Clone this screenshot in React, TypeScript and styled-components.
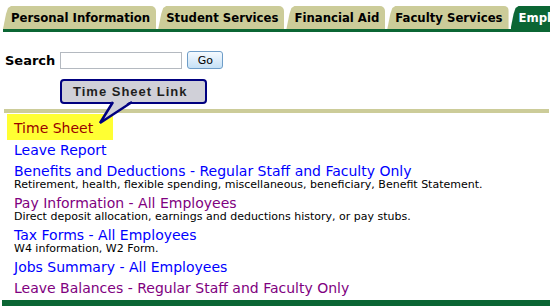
import styled, { createGlobalStyle } from "styled-components";

const GlobalStyle = createGlobalStyle`
  html, body {
    margin: 0;
    padding: 0;
    background: #ffffff;
  }
  body {
    width: 550px;
    height: 306px;
    overflow: hidden;
    font-family: "DejaVu Sans", Verdana, sans-serif;
  }
`;

const Page = styled.div`
  height: 306px;
  display: flex;
  flex-direction: column;
  padding-left: 3px;
  box-sizing: border-box;
  overflow: hidden;
`;

const TabBar = styled.nav`
  display: flex;
  align-items: flex-end;
  gap: 2px;
  margin-top: 6px;
  border-bottom: 3px solid #0b6634;
  white-space: nowrap;
  overflow: hidden;
`;

const Tab = styled.a<{ $active?: boolean }>`
  flex: none;
  height: 23px;
  box-sizing: border-box;
  padding: 3px 6px 0 8px;
  background: ${(p) => (p.$active ? "#0b6634" : "#cccc99")};
  color: ${(p) => (p.$active ? "#ffffff" : "#000000")};
  font: bold 13px/17px "DejaVu Sans Condensed", "DejaVu Sans", sans-serif;
  font-stretch: condensed;
  text-decoration: none;
  border-top-right-radius: 5px;
  clip-path: polygon(0 100%, 3px 8px, 5px 2px, 8px 0, 100% 0, 100% 100%);
`;

const SearchRow = styled.form`
  display: flex;
  align-items: center;
  height: 18px;
  margin: 19px 0 0 2px;
`;

const SearchLabel = styled.label`
  font: bold 13px "DejaVu Sans", sans-serif;
  color: #000;
  margin-right: 5px;
`;

const SearchInput = styled.input`
  width: 122px;
  height: 17px;
  box-sizing: border-box;
  border: 1px solid #b4b9c0;
  margin: 0 5px 0 0;
  padding: 0 2px;
`;

const GoButton = styled.button`
  width: 36px;
  height: 18px;
  padding: 0;
  font: 11px "DejaVu Sans", sans-serif;
  color: #000;
  border: 1px solid #6e9dc8;
  border-radius: 3px;
  background: linear-gradient(#f5faff, #c6e1f6);
`;

const AnnotationArea = styled.div`
  height: 40px;
  padding-top: 10px;
  box-sizing: border-box;
`;

const Callout = styled.div`
  position: relative;
  margin-left: 57px;
  width: 147px;
  height: 25px;
  box-sizing: border-box;
  border: 2px solid #000080;
  border-radius: 4px;
  background: #d0d0d8;
  color: #1e1e1e;
  font: bold 13px/21px "Liberation Sans", Arial, sans-serif;
  letter-spacing: 1px;
  padding-left: 11px;
`;

const CalloutTail = styled.svg`
  position: absolute;
  left: 34px;
  top: 19px;
  overflow: visible;
`;

const Rule = styled.hr`
  height: 4px;
  margin: 0 1px;
  border: none;
  background: #cccc99;
`;

const LinkList = styled.ul`
  list-style: none;
  margin: 0;
  padding: 0;
  flex: 1;
`;

const Item = styled.li<{ $highlight?: boolean }>`
  ${(p) =>
    p.$highlight
      ? `
    width: 106px;
    box-sizing: border-box;
    margin: 1px 0 0 4px;
    padding: 6px 0 3px 7px;
    background: #ffff33;
  `
      : `
    padding: 2px 0 2px 11px;
  `}
`;

const MenuLink = styled.a<{ $tone: "new" | "visited" | "current" }>`
  display: block;
  font: 14px/17px "DejaVu Sans", Verdana, sans-serif;
  text-decoration: none;
  white-space: nowrap;
  color: ${(p) =>
    p.$tone === "current" ? "#990000" : p.$tone === "visited" ? "#800080" : "#0000ff"};
`;

const Desc = styled.div`
  font: 11px/13px "DejaVu Sans", Verdana, sans-serif;
  color: #000;
  margin-top: -2px;
  white-space: nowrap;
`;

const FooterBar = styled.div`
  height: 6px;
  margin-left: -1px;
  background: #0b6634;
`;

const tabs = [
  "Personal Information",
  "Student Services",
  "Financial Aid",
  "Faculty Services",
  "Employee",
];

const items: { label: string; tone: "new" | "visited" | "current"; desc?: string }[] = [
  { label: "Time Sheet", tone: "current" },
  { label: "Leave Report", tone: "new" },
  {
    label: "Benefits and Deductions - Regular Staff and Faculty Only",
    tone: "new",
    desc: "Retirement, health, flexible spending, miscellaneous, beneficiary, Benefit Statement.",
  },
  {
    label: "Pay Information - All Employees",
    tone: "visited",
    desc: "Direct deposit allocation, earnings and deductions history, or pay stubs.",
  },
  { label: "Tax Forms - All Employees", tone: "new", desc: "W4 information, W2 Form." },
  { label: "Jobs Summary - All Employees", tone: "new" },
  { label: "Leave Balances - Regular Staff and Faculty Only", tone: "visited" },
];

export default function App() {
  return (
    <Page>
      <GlobalStyle />
      <TabBar>
        {tabs.map((t) => (
          <Tab key={t} href="#" $active={t === "Employee"}>
            {t}
          </Tab>
        ))}
      </TabBar>

      <SearchRow onSubmit={(e) => e.preventDefault()}>
        <SearchLabel htmlFor="search">Search</SearchLabel>
        <SearchInput id="search" type="text" />
        <GoButton type="submit">Go</GoButton>
      </SearchRow>

      <AnnotationArea>
        <Callout>
          Time Sheet Link
          <CalloutTail width="40" height="26" viewBox="0 0 40 26">
            <polygon points="17,0 36,0 4,23" fill="#d0d0d8" />
            <polyline
              points="17,2 4,23 36,2"
              fill="none"
              stroke="#000080"
              strokeWidth="2.5"
              strokeLinejoin="miter"
            />
          </CalloutTail>
        </Callout>
      </AnnotationArea>

      <Rule />

      <LinkList>
        {items.map((it) => (
          <Item key={it.label} $highlight={it.tone === "current"}>
            <MenuLink href="#" $tone={it.tone}>
              {it.label}
            </MenuLink>
            {it.desc && <Desc>{it.desc}</Desc>}
          </Item>
        ))}
      </LinkList>

      <FooterBar />
    </Page>
  );
}
